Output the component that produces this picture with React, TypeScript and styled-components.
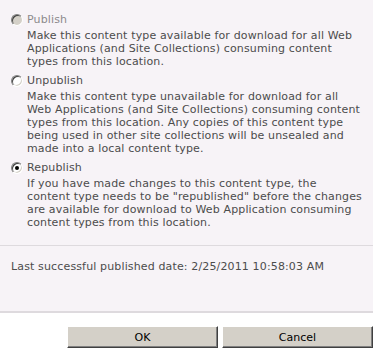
import React from "react";
import styled, { createGlobalStyle } from "styled-components";

const GlobalStyle = createGlobalStyle`
  html, body {
    margin: 0;
    padding: 0;
    background: #ffffff;
  }
  body {
    font-family: "DejaVu Sans", Verdana, sans-serif;
    font-size: 11px;
    letter-spacing: 0.14px;
    color: #4c4c4c;
  }
`;

const Dialog = styled.div`
  width: 373px;
  height: 348px;
  overflow: hidden;
  background: #ffffff;
`;

const Panel = styled.div`
  background: #f7f3f7;
  border-bottom: 2px solid #dedade;
`;

const Options = styled.div`
  padding: 13px 6px 16px 11px;
  border-bottom: 1px solid #dedade;
`;

const Option = styled.div`
  margin-bottom: 6px;
  &:last-child {
    margin-bottom: 0;
  }
`;

const OptionHead = styled.label`
  display: flex;
  align-items: center;
  gap: 4px;
  height: 13px;
  line-height: 13px;
`;

const Radio = styled.span<{ $checked?: boolean; $disabled?: boolean }>`
  position: relative;
  box-sizing: border-box;
  width: 12px;
  height: 12px;
  border-radius: 50%;
  border: 1px solid;
  border-color: #808080 #ffffff #ffffff #808080;
  background: ${(p) => (p.$disabled ? "#d4d0c8" : "#ffffff")};
  box-shadow: inset 1px 1px 0 #404040, inset -1px -1px 0 #d4d0c8;
  flex: none;
  &::after {
    content: "";
    display: ${(p) => (p.$checked ? "block" : "none")};
    position: absolute;
    left: 3px;
    top: 3px;
    width: 4px;
    height: 4px;
    border-radius: 50%;
    background: #000000;
  }
`;

const OptionLabel = styled.span<{ $disabled?: boolean }>`
  color: ${(p) => (p.$disabled ? "#8c8a8c" : "#4c4c4c")};
`;

const Description = styled.div`
  margin: 3px 0 0 16px;
  line-height: 13px;
`;

const Line = styled.div`
  white-space: nowrap;
`;

const DateRow = styled.div`
  padding: 14px 11px 38px 11px;
  line-height: 13px;
`;

const Footer = styled.div`
  display: flex;
  justify-content: flex-end;
  gap: 4px;
  padding-top: 13px;
`;

const Button = styled.button`
  width: 151px;
  height: 22px;
  box-sizing: border-box;
  background: #d4d0c8;
  border: 1px solid;
  border-color: #ffffff #404040 #404040 #ffffff;
  box-shadow: inset -1px -1px 0 #808080;
  font-family: "DejaVu Sans", Verdana, sans-serif;
  font-size: 11px;
  color: #000000;
  padding: 0;
`;

const options = [
  {
    label: "Publish",
    disabled: true,
    checked: false,
    lines: [
      "Make this content type available for download for all Web",
      "Applications (and Site Collections) consuming content",
      "types from this location.",
    ],
  },
  {
    label: "Unpublish",
    disabled: false,
    checked: false,
    lines: [
      "Make this content type unavailable for download for all",
      "Web Applications (and Site Collections) consuming content",
      "types from this location. Any copies of this content type",
      "being used in other site collections will be unsealed and",
      "made into a local content type.",
    ],
  },
  {
    label: "Republish",
    disabled: false,
    checked: true,
    lines: [
      "If you have made changes to this content type, the",
      'content type needs to be "republished" before the changes',
      "are available for download to Web Application consuming",
      "content types from this location.",
    ],
  },
];

export default function App() {
  return (
    <>
      <GlobalStyle />
      <Dialog>
        <Panel>
          <Options>
            {options.map((o) => (
              <Option key={o.label}>
                <OptionHead>
                  <Radio $checked={o.checked} $disabled={o.disabled} />
                  <OptionLabel $disabled={o.disabled}>{o.label}</OptionLabel>
                </OptionHead>
                <Description>
                  {o.lines.map((l) => (
                    <Line key={l}>{l}</Line>
                  ))}
                </Description>
              </Option>
            ))}
          </Options>
          <DateRow>Last successful published date: 2/25/2011 10:58:03 AM</DateRow>
        </Panel>
        <Footer>
          <Button>OK</Button>
          <Button>Cancel</Button>
        </Footer>
      </Dialog>
    </>
  );
}
